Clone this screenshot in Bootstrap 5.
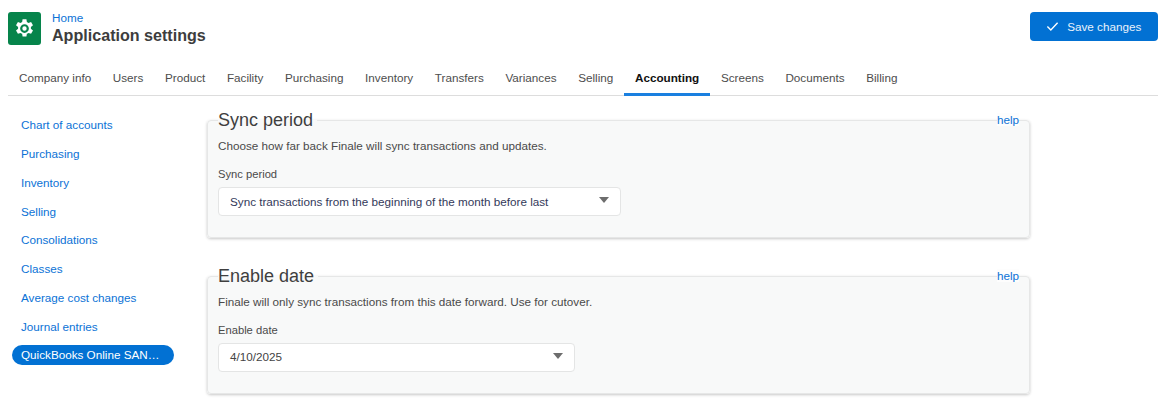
<!DOCTYPE html>
<html lang="en"><head><meta charset="utf-8"><title>Application settings</title>
<link href="https://cdn.jsdelivr.net/npm/bootstrap@5.3.0/dist/css/bootstrap.min.css" rel="stylesheet">
<style>
html,body{height:402px;overflow:hidden}
body{font-family:"Liberation Sans",Arial,sans-serif;font-size:11.7px;color:#444;background:#fff;padding:12px 9px 0 8px}
a{text-decoration:none;color:#0b72d6}
.app-top{height:32px}
.app-logo{width:33px;height:33px;background:#06844b;border-radius:3px}
.crumb{font-size:11.7px;line-height:13px;margin-top:-1px}
.page-title{font-size:16.1px;font-weight:700;line-height:23px;color:#3d3d3d;margin:0}
.save-btn{width:128px;height:29px;background:#0271d3;border:0;border-radius:4px;color:#e8f2fb;font-size:11.7px;padding:0 .5px 0 0}
.tabs-bar{margin-top:19px;height:33px;border-bottom:1px solid #ddd;padding-left:.2px}
.tab-link{padding:0 10.83px;height:33px;line-height:29px;color:#4d4d4d;font-size:11.7px;margin-bottom:-1px}
.tab-link.on{color:#111;font-weight:700;border-bottom:3px solid #1a80e0}
.side-col{width:199px;padding:19px 0 0 4px}
.side-link{display:block;height:20px;line-height:20px;padding:0 9px;margin-bottom:8.85px;font-size:11.7px;width:162px}
.side-link.on{background:#0271d3;color:#fff;border-radius:10px;white-space:nowrap;margin-top:-.5px}
.main-col{width:823px;padding-top:14px}
.set-box{position:relative;background:#f8f9f9;border:1px solid #e6e7e7;border-radius:4px;box-shadow:0 1px 3px rgba(0,0,0,.22);padding:0 10px;margin:0 0 27.6px;height:128px}
.set-box:last-child{margin-bottom:0}
.set-box legend{float:none;width:auto;font-size:18px;line-height:21px;color:#3f3f3f;padding:0 4px 0 0;margin:0 0 8px}
.help-link{position:absolute;right:10px;top:-26px;font-size:11.7px;line-height:13px;background:#fdfdfd}
.set-desc{font-size:11.7px;line-height:14px;color:#4a4a4a;margin:0 0 15.1px}
.set-label{font-size:11.2px;line-height:13px;margin:0 0 5.9px;display:block;color:#4a4a4a}
.fake-select{height:29px;background:#fff;border:1px solid #e4e5e5;border-radius:4px;padding:0 11px;font-size:11.7px;color:#33395a}
.fake-select.w1{width:403px}
.fake-select.w2{width:357px;color:#444}
.caret-down{width:0;height:0;border-left:5px solid transparent;border-right:5px solid transparent;border-top:6px solid #6d6d6d;margin-top:-3px}
.logo-gap{gap:11px}
</style></head><body>
<div class="app-top d-flex justify-content-between align-items-start">
  <div class="d-flex logo-gap">
    <div class="app-logo d-flex align-items-center justify-content-center">
      <svg width="21" height="21" viewBox="0 0 24 24" fill="#fff"><path fill-rule="evenodd" d="M9.800 1.500h4.400l.5 3a8 8 0 0 1 1.900 1.100l2.900-1.100 2.200 3.800-2.400 1.900a8 8 0 0 1 0 2.200l2.400 1.900-2.200 3.800-2.900-1.100a8 8 0 0 1-1.900 1.100l-.5 3H9.800l-.5-3a8 8 0 0 1-1.900-1.100l-2.900 1.100-2.200-3.800 2.400-1.900a8 8 0 0 1 0-2.200L2.300 8.300l2.200-3.800 2.900 1.100a8 8 0 0 1 1.900-1.100zM12 7a5 5 0 1 0 0 10 5 5 0 0 0 0-10zM12 9.500a2.500 2.500 0 1 1 0 5 2.500 2.500 0 0 1 0-5z"/></svg>
    </div>
    <div>
      <a class="crumb d-block" href="#">Home</a>
      <h1 class="page-title">Application settings</h1>
    </div>
  </div>
  <button class="save-btn d-flex align-items-center justify-content-center gap-2" type="button">
    <svg width="13" height="11" viewBox="0 0 14 11" fill="none" stroke="#fff" stroke-width="1.500"><path d="M1.500 5.500 5.200 9.200 12.500 1.500"/></svg>
    <span>Save changes</span>
  </button>
</div>
<nav class="tabs-bar d-flex">
  <a class="tab-link" href="#">Company info</a><a class="tab-link" href="#">Users</a><a class="tab-link" href="#">Product</a><a class="tab-link" href="#">Facility</a><a class="tab-link" href="#">Purchasing</a><a class="tab-link" href="#">Inventory</a><a class="tab-link" href="#">Transfers</a><a class="tab-link" href="#">Variances</a><a class="tab-link" href="#">Selling</a><a class="tab-link on" href="#">Accounting</a><a class="tab-link" href="#">Screens</a><a class="tab-link" href="#">Documents</a><a class="tab-link" href="#">Billing</a>
</nav>
<div class="d-flex">
  <div class="side-col flex-shrink-0">
    <a class="side-link" href="#">Chart of accounts</a>
    <a class="side-link" href="#">Purchasing</a>
    <a class="side-link" href="#">Inventory</a>
    <a class="side-link" href="#">Selling</a>
    <a class="side-link" href="#">Consolidations</a>
    <a class="side-link" href="#">Classes</a>
    <a class="side-link" href="#">Average cost changes</a>
    <a class="side-link" href="#">Journal entries</a>
    <a class="side-link on" href="#">QuickBooks Online SAN…</a>
  </div>
  <div class="main-col">
    <fieldset class="set-box">
      <legend>Sync period</legend>
      <a class="help-link" href="#">help</a>
      <p class="set-desc">Choose how far back Finale will sync transactions and updates.</p>
      <label class="set-label">Sync period</label>
      <div class="fake-select w1 d-flex align-items-center justify-content-between"><span>Sync transactions from the beginning of the month before last</span><span class="caret-down"></span></div>
    </fieldset>
    <fieldset class="set-box">
      <legend>Enable date</legend>
      <a class="help-link" href="#">help</a>
      <p class="set-desc">Finale will only sync transactions from this date forward. Use for cutover.</p>
      <label class="set-label">Enable date</label>
      <div class="fake-select w2 d-flex align-items-center justify-content-between"><span>4/10/2025</span><span class="caret-down"></span></div>
    </fieldset>
  </div>
</div>
<script src="https://cdn.jsdelivr.net/npm/bootstrap@5.3.0/dist/js/bootstrap.bundle.min.js"></script>
</body></html>
